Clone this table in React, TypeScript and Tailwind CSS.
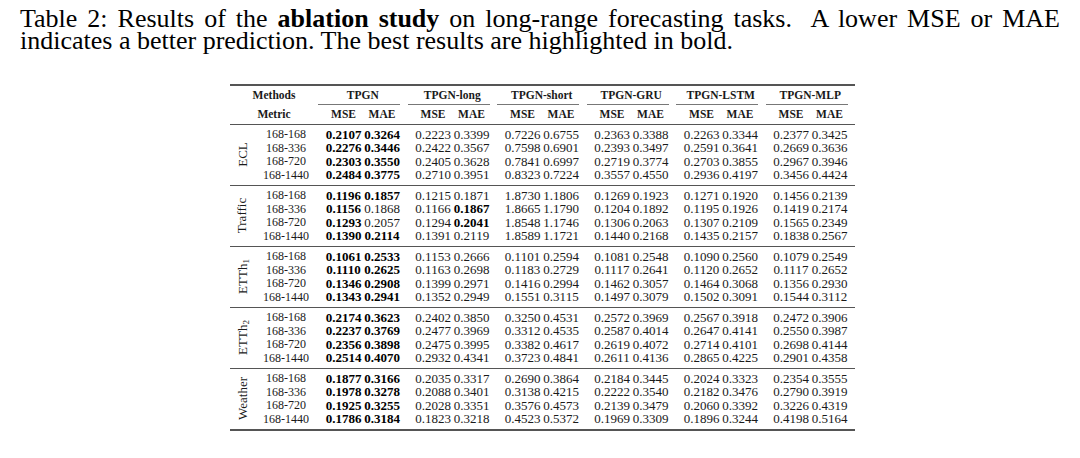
const methods = ["TPGN", "TPGN-long", "TPGN-short", "TPGN-GRU", "TPGN-LSTM", "TPGN-MLP"];
const horizons = ["168-168", "168-336", "168-720", "168-1440"];

// "*" at the end of a value marks it bold
const groups: { name: string; sub?: string; rows: string[] }[] = [
  {
    name: "ECL",
    rows: [
      "0.2107* 0.3264* 0.2223 0.3399 0.7226 0.6755 0.2363 0.3388 0.2263 0.3344 0.2377 0.3425",
      "0.2276* 0.3446* 0.2422 0.3567 0.7598 0.6901 0.2393 0.3497 0.2591 0.3641 0.2669 0.3636",
      "0.2303* 0.3550* 0.2405 0.3628 0.7841 0.6997 0.2719 0.3774 0.2703 0.3855 0.2967 0.3946",
      "0.2484* 0.3775* 0.2710 0.3951 0.8323 0.7224 0.3557 0.4550 0.2936 0.4197 0.3456 0.4424",
    ],
  },
  {
    name: "Traffic",
    rows: [
      "0.1196* 0.1857* 0.1215 0.1871 1.8730 1.1806 0.1269 0.1923 0.1271 0.1920 0.1456 0.2139",
      "0.1156* 0.1868 0.1166 0.1867* 1.8665 1.1790 0.1204 0.1892 0.1195 0.1926 0.1419 0.2174",
      "0.1293* 0.2057 0.1294 0.2041* 1.8548 1.1746 0.1306 0.2063 0.1307 0.2109 0.1565 0.2349",
      "0.1390* 0.2114* 0.1391 0.2119 1.8589 1.1721 0.1440 0.2168 0.1435 0.2157 0.1838 0.2567",
    ],
  },
  {
    name: "ETTh",
    sub: "1",
    rows: [
      "0.1061* 0.2533* 0.1153 0.2666 0.1101 0.2594 0.1081 0.2548 0.1090 0.2560 0.1079 0.2549",
      "0.1110* 0.2625* 0.1163 0.2698 0.1183 0.2729 0.1117 0.2641 0.1120 0.2652 0.1117 0.2652",
      "0.1346* 0.2908* 0.1399 0.2971 0.1416 0.2994 0.1462 0.3057 0.1464 0.3068 0.1356 0.2930",
      "0.1343* 0.2941* 0.1352 0.2949 0.1551 0.3115 0.1497 0.3079 0.1502 0.3091 0.1544 0.3112",
    ],
  },
  {
    name: "ETTh",
    sub: "2",
    rows: [
      "0.2174* 0.3623* 0.2402 0.3850 0.3250 0.4531 0.2572 0.3969 0.2567 0.3918 0.2472 0.3906",
      "0.2237* 0.3769* 0.2477 0.3969 0.3312 0.4535 0.2587 0.4014 0.2647 0.4141 0.2550 0.3987",
      "0.2356* 0.3898* 0.2475 0.3995 0.3382 0.4617 0.2619 0.4072 0.2714 0.4101 0.2698 0.4144",
      "0.2514* 0.4070* 0.2932 0.4341 0.3723 0.4841 0.2611 0.4136 0.2865 0.4225 0.2901 0.4358",
    ],
  },
  {
    name: "Weather",
    rows: [
      "0.1877* 0.3166* 0.2035 0.3317 0.2690 0.3864 0.2184 0.3445 0.2024 0.3323 0.2354 0.3555",
      "0.1978* 0.3278* 0.2088 0.3401 0.3138 0.4215 0.2222 0.3540 0.2182 0.3476 0.2790 0.3919",
      "0.1925* 0.3255* 0.2028 0.3351 0.3576 0.4573 0.2139 0.3479 0.2060 0.3392 0.3226 0.4319",
      "0.1786* 0.3184* 0.1823 0.3218 0.4523 0.5372 0.1969 0.3309 0.1896 0.3244 0.4198 0.5164",
    ],
  },
];

function Cell({ v }: { v: string }) {
  const bold = v.endsWith("*");
  return (
    <div className={`w-[38.5px] text-center ${bold ? "font-bold text-black" : ""}`}>
      {bold ? v.slice(0, -1) : v}
    </div>
  );
}

function DataRow({ h, values }: { h: string; values: string[] }) {
  const pairs = [0, 1, 2, 3, 4, 5].map((i) => values.slice(i * 2, i * 2 + 2));
  return (
    <div className="flex h-[13.5px] items-center leading-none">
      <div className="w-[64px] text-center text-[12px]">{h}</div>
      {pairs.map((p, i) => (
        <div key={i} className="flex w-[89.5px] pl-[6.25px] text-[13px]">
          <Cell v={p[0]} />
          <Cell v={p[1]} />
        </div>
      ))}
    </div>
  );
}

export default function App() {
  return (
    <div className="h-[458px] w-[1080px] bg-white text-[#1a1a1a] [font-family:'Liberation_Serif','Times_New_Roman',serif]">
      <p className="ml-[20px] w-[1040px] pt-[8px] text-justify text-[26px] leading-[21.7px] text-black">
        Table 2: Results of the <b>ablation study</b> on long-range forecasting tasks.&nbsp; A lower MSE or MAE
        indicates a better prediction. The best results are highlighted in bold.
      </p>

      <div className="ml-[230px] mt-[33px] w-[625px]">
        <div className="h-[2px] bg-[#555]" />

        {/* header */}
        <div className="flex h-[18px] items-center text-[11.5px] font-bold leading-none">
          <div className="w-[88px] text-center">Methods</div>
          {methods.map((m) => (
            <div key={m} className="w-[89.5px] text-center">
              {m}
            </div>
          ))}
        </div>
        <div className="flex h-px">
          <div className="w-[88px]" />
          {methods.map((m) => (
            <div key={m} className="w-[89.5px] pr-[7.5px]">
              <div className="h-px bg-[#777]" />
            </div>
          ))}
        </div>
        <div className="flex h-[19px] items-center text-[11.5px] font-bold leading-none">
          <div className="w-[88px] text-center">Metric</div>
          {methods.map((m) => (
            <div key={m} className="flex w-[89.5px] pl-[6.25px]">
              <div className="w-[38.5px] text-center">MSE</div>
              <div className="w-[38.5px] text-center">MAE</div>
            </div>
          ))}
        </div>

        {groups.map((g, gi) => (
          <div key={gi}>
            <div className="h-px bg-[#555]" />
            <div className="flex pb-[4px] pt-[2px]">
              <div className="flex w-[24px] items-center justify-center">
                <span className="-rotate-90 whitespace-nowrap text-[13px] leading-none">
                  {g.name}
                  {g.sub && <sub className="text-[9px]">{g.sub}</sub>}
                </span>
              </div>
              <div>
                {g.rows.map((r, ri) => (
                  <DataRow key={ri} h={horizons[ri]} values={r.split(" ")} />
                ))}
              </div>
            </div>
          </div>
        ))}
        <div className="h-[2px] bg-[#555]" />
      </div>
    </div>
  );
}
